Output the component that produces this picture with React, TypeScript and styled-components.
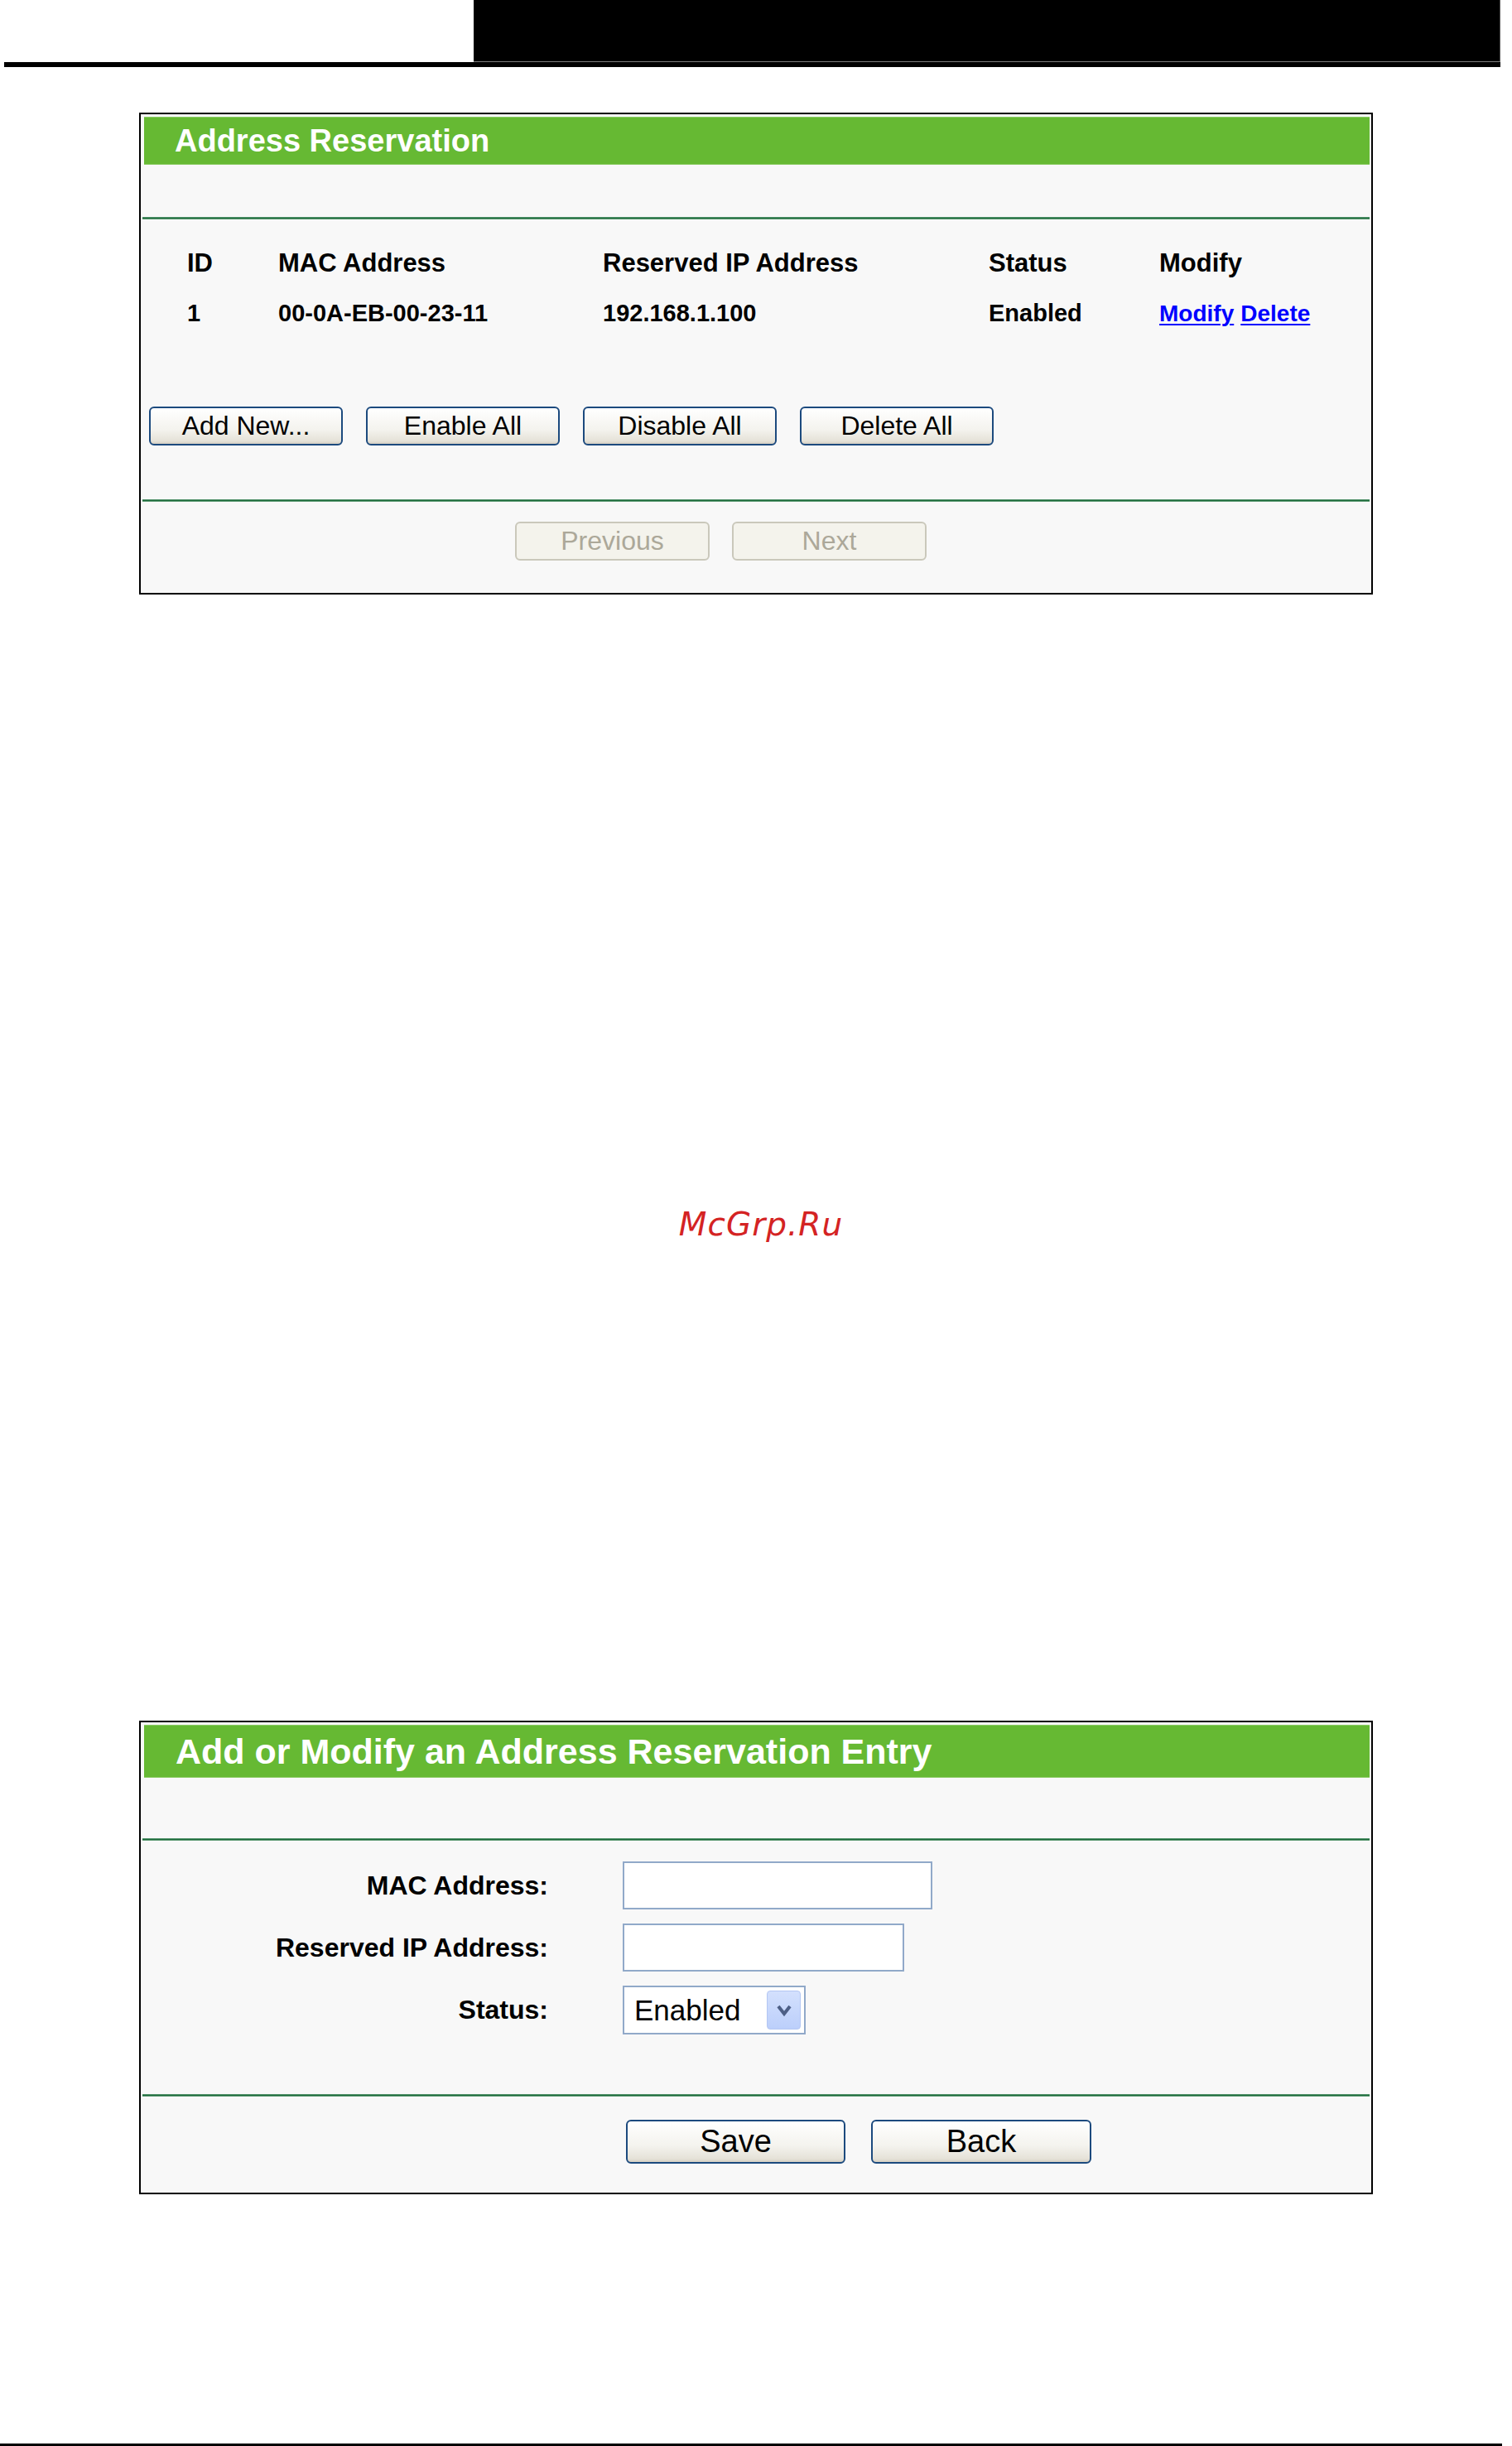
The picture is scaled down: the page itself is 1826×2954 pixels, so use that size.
import React from 'react'
import styled, { createGlobalStyle } from 'styled-components'

const GlobalStyle = createGlobalStyle`
    html, body {
        margin: 0;
        padding: 0;
        background: #ffffff;
    }
    body {
        font-family: 'Liberation Sans', Arial, sans-serif;
        color: #000;
    }
`

const Page = styled.div`
    width: 1826px;
    height: 2954px;
    display: flex;
    flex-direction: column;
    overflow: hidden;
`

const TopRule = styled.div`
    display: flex;
    margin-left: 5px;
    width: 1807px;
    border-bottom: 6px solid #000;
`

const BlackTab = styled.div`
    margin-left: 567px;
    flex: 1;
    height: 75px;
    background: #000;
    box-shadow: inset 0 -1px 0 #7d7d7d, inset -1px 0 0 #5a5a5a;
`

const Panel = styled.section<{ $top: number; $bottom: number }>`
    margin-top: ${props => props.$top}px;
    margin-left: 168px;
    width: 1490px;
    box-sizing: border-box;
    border: 2px solid #000;
    background: #f8f8f8;
    padding: 3px 2px ${props => props.$bottom}px 2px;
    display: flex;
    flex-direction: column;
`

const TitleBar = styled.div<{ $height: number; $size: number; $indent: number }>`
    height: ${props => props.$height}px;
    margin-left: 2px;
    background: #66b933;
    box-shadow: inset 0 1px 0 #8acb62, inset 0 -1px 0 #8acb62;
    display: flex;
    align-items: center;
    padding-left: ${props => props.$indent}px;
    color: #fff;
    font-weight: bold;
    font-size: ${props => props.$size}px;
    line-height: 1;
    white-space: nowrap;
`

const Divider = styled.div<{ $top: number }>`
    margin-top: ${props => props.$top}px;
    height: 3px;
    background: linear-gradient(#7fb593, #1d6a3b 35%, #1d6a3b 65%, #9cc8aa);
`

const ReservationTable = styled.div`
    margin-top: 23px;
    padding-left: 54px;
    display: grid;
    grid-template-columns: 110px 392px 466px 206px 1fr;
    grid-auto-rows: 60px;
    align-items: center;
    font-weight: bold;
    white-space: nowrap;
`

const HeadCell = styled.div`
    font-size: 31px;
`

const Cell = styled.div`
    font-size: 29px;
`

const ActionLink = styled.a`
    color: #0000ff;
    text-decoration: underline;
    text-decoration-thickness: 2px;
    text-underline-offset: 3px;
    cursor: pointer;
    font-size: 28px;
`

const ButtonRow = styled.div<{ $top: number; $indent: number; $gap: number; $height: number }>`
    margin-top: ${props => props.$top}px;
    padding-left: ${props => props.$indent}px;
    display: flex;
    gap: ${props => props.$gap}px;
    height: ${props => props.$height}px;
`

const XpButton = styled.button<{ $width: number; $size: number }>`
    width: ${props => props.$width}px;
    height: 100%;
    box-sizing: border-box;
    border: 2px solid #1c4a7e;
    border-radius: 6px;
    background: linear-gradient(#ffffff, #f4f3ee 60%, #e5e2d8 92%, #d6d0c3);
    font-family: 'Liberation Sans', Arial, sans-serif;
    font-size: ${props => props.$size}px;
    color: #000;
    padding: 0;
    cursor: pointer;

    &:disabled {
        border-color: #cac8bb;
        background: #f4f3ec;
        color: #aca899;
        cursor: default;
    }
`

const WatermarkZone = styled.div`
    height: 1361px;
    display: flex;
    justify-content: center;
    padding-top: 738px;
    padding-left: 12px;
    box-sizing: border-box;
`

const Watermark = styled.div`
    font-family: 'DejaVu Sans', Verdana, sans-serif;
    font-style: italic;
    font-size: 39px;
    line-height: 46px;
    color: #d42323;
    letter-spacing: 1px;
`

const EntryForm = styled.div`
    margin-top: 25px;
    display: grid;
    grid-template-columns: 490px 1fr;
    column-gap: 90px;
    row-gap: 17px;
    align-items: center;
`

const FieldLabel = styled.label`
    text-align: right;
    font-weight: bold;
    font-size: 32px;
    white-space: nowrap;
`

const TextField = styled.input<{ $width: number }>`
    width: ${props => props.$width}px;
    height: 58px;
    box-sizing: border-box;
    border: 2px solid #91a9c9;
    background: #fff;
    outline: none;
    font-size: 32px;
`

const SelectBox = styled.div`
    width: 221px;
    height: 59px;
    box-sizing: border-box;
    border: 2px solid #91a9c9;
    background: #fff;
    display: flex;
    align-items: center;
    justify-content: space-between;
    padding: 4px 4px 4px 12px;
    font-size: 35px;
`

const DropButton = styled.div`
    width: 41px;
    height: 100%;
    border-radius: 4px;
    background: linear-gradient(#d3e0fd, #bccffb);
    border: 1px solid #b3c6f3;
    box-sizing: border-box;
    display: flex;
    align-items: center;
    justify-content: center;
`

const FooterRule = styled.div`
    margin-top: 301px;
    width: 1814px;
    height: 3px;
    background: #000;
`

const Chevron = () => (
    <svg width="22" height="16" viewBox="0 0 22 16">
        <path d="M4 3 L11 12 L18 3" fill="none" stroke="#4d5f86" strokeWidth="4" />
    </svg>
)

const entries = [
    { id: '1', mac: '00-0A-EB-00-23-11', ip: '192.168.1.100', status: 'Enabled' },
]

const bulkActions = ['Add New...', 'Enable All', 'Disable All', 'Delete All']

const App: React.FC = () => {
    return (
        <Page>
            <GlobalStyle />
            <TopRule>
                <BlackTab />
            </TopRule>

            <Panel $top={55} $bottom={39}>
                <TitleBar $height={58} $size={38} $indent={37}>
                    {'Address Reservation'}
                </TitleBar>
                <Divider $top={63} />
                <ReservationTable>
                    <HeadCell>{'ID'}</HeadCell>
                    <HeadCell>{'MAC Address'}</HeadCell>
                    <HeadCell>{'Reserved IP Address'}</HeadCell>
                    <HeadCell>{'Status'}</HeadCell>
                    <HeadCell>{'Modify'}</HeadCell>
                    {entries.map(x => (
                        <React.Fragment key={x.id}>
                            <Cell>{x.id}</Cell>
                            <Cell>{x.mac}</Cell>
                            <Cell>{x.ip}</Cell>
                            <Cell>{x.status}</Cell>
                            <Cell>
                                <ActionLink>{'Modify'}</ActionLink> <ActionLink>{'Delete'}</ActionLink>
                            </Cell>
                        </React.Fragment>
                    ))}
                </ReservationTable>
                <ButtonRow $top={83} $indent={8} $gap={28} $height={47}>
                    {bulkActions.map(label => (
                        <XpButton key={label} $width={234} $size={32}>
                            {label}
                        </XpButton>
                    ))}
                </ButtonRow>
                <Divider $top={65} />
                <ButtonRow $top={24} $indent={450} $gap={27} $height={47}>
                    <XpButton $width={235} $size={32} disabled>
                        {'Previous'}
                    </XpButton>
                    <XpButton $width={235} $size={32} disabled>
                        {'Next'}
                    </XpButton>
                </ButtonRow>
            </Panel>

            <WatermarkZone>
                <Watermark>{'McGrp.Ru'}</Watermark>
            </WatermarkZone>

            <Panel $top={0} $bottom={35}>
                <TitleBar $height={64} $size={43} $indent={38}>
                    {'Add or Modify an Address Reservation Entry'}
                </TitleBar>
                <Divider $top={73} />
                <EntryForm>
                    <FieldLabel>{'MAC Address:'}</FieldLabel>
                    <TextField $width={374} />
                    <FieldLabel>{'Reserved IP Address:'}</FieldLabel>
                    <TextField $width={340} />
                    <FieldLabel>{'Status:'}</FieldLabel>
                    <SelectBox>
                        <span>{'Enabled'}</span>
                        <DropButton>
                            <Chevron />
                        </DropButton>
                    </SelectBox>
                </EntryForm>
                <Divider $top={72} />
                <ButtonRow $top={28} $indent={584} $gap={31} $height={53}>
                    <XpButton $width={265} $size={38}>
                        {'Save'}
                    </XpButton>
                    <XpButton $width={266} $size={38}>
                        {'Back'}
                    </XpButton>
                </ButtonRow>
            </Panel>

            <FooterRule />
        </Page>
    )
}

export default App
